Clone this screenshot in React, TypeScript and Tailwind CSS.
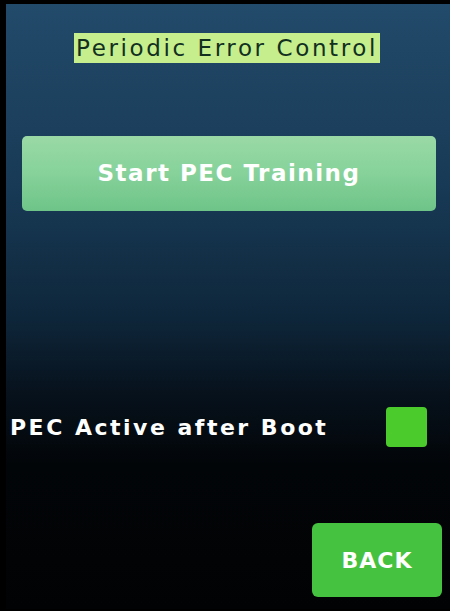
export default function App() {
  const font = { fontFamily: '"DejaVu Sans", "Liberation Sans", sans-serif' };

  return (
    <div className="w-[450px] h-[611px] bg-black pl-[6px] pt-[4px] pb-[2px] overflow-hidden" style={font}>
      <div className="h-full flex flex-col bg-[linear-gradient(180deg,#224a6a_0%,#183a56_30%,#0e263a_52%,#07121d_64%,#020508_76%,#010203_100%)]">
        {/* Title */}
        <div className="flex justify-center pt-[29px] pr-[2px]">
          <h1 className="h-[30px] px-[2px] bg-[#c6ee8c] text-[#12301f] text-[23px] leading-[30px] tracking-[2.6px] font-normal">
            Periodic Error Control
          </h1>
        </div>

        {/* Start button */}
        <div className="pl-[16px] pr-[14px] pt-[73px]">
          <button className="w-full h-[75px] rounded-[5px] bg-[linear-gradient(180deg,#9ad9a6_0%,#86d29a_50%,#6ec488_100%)] text-white text-[23px] font-bold tracking-[1.5px]">
            Start PEC Training
          </button>
        </div>

        {/* PEC active row */}
        <div className="flex items-center justify-between pl-[4px] pr-[23px] pt-[196px]">
          <span className="text-white text-[22px] font-bold tracking-[2.5px]">PEC Active after Boot</span>
          <div className="w-[41px] h-[40px] rounded-[4px] bg-[#4ccc2c]" />
        </div>

        {/* Back */}
        <div className="flex justify-end pr-[8px] pt-[76px]">
          <button className="w-[130px] h-[74px] rounded-[6px] bg-[#45c23f] text-white text-[22px] font-bold tracking-[1px]">
            BACK
          </button>
        </div>
      </div>
    </div>
  );
}
